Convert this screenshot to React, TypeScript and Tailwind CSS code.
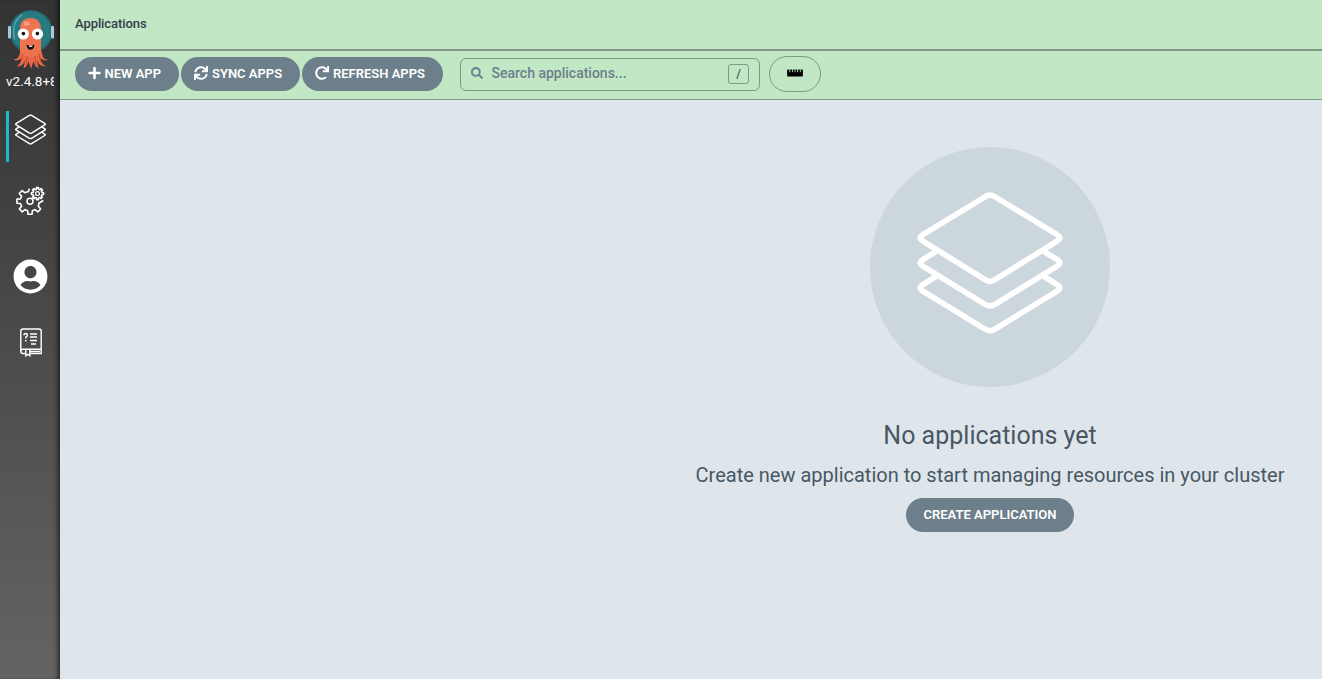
import React from 'react';
import { FaPlus, FaSync, FaRedo, FaSearch, FaRulerHorizontal, FaUserCircle } from 'react-icons/fa';

function Layers({ className, stroke }: { className: string; stroke: number }) {
  return (
    <svg viewBox="46 43 148 146" className={className} fill="none" stroke="white" strokeWidth={stroke} strokeLinejoin="round">
      <path d="M115 49.8Q120 46.4 125 49.8L186.7 87.3C191 90 191 91.6 186.7 94.3L125 132.7Q120 135.9 115 132.7L53.3 94.3C49 91.6 49 90 53.3 87.3Z" />
      <path d="M66 104.5L53.3 112.3C49 115 49 116.6 53.3 119.3L115 157.3Q120 160.5 125 157.3L186.7 119.3C191 116.6 191 115 186.7 112.3L174 104.5" />
      <path d="M66 129.5L53.3 137.3C49 140 49 141.6 53.3 144.3L115 182.2Q120 185.4 125 182.2L186.7 144.3C191 141.6 191 140 186.7 137.3L174 129.5" />
    </svg>
  );
}

function gear(cx: number, cy: number, inner: number, outer: number, first: number, count: number, closed: boolean) {
  const pts: string[] = [];
  const add = (r: number, deg: number) => {
    const a = (deg * Math.PI) / 180;
    pts.push(`${(cx + r * Math.cos(a)).toFixed(2)} ${(cy + r * Math.sin(a)).toFixed(2)}`);
  };
  for (let i = 0; i < count; i++) {
    const a = first + i * 45;
    add(inner, a - 14);
    add(outer, a - 9);
    add(outer, a + 9);
    add(inner, a + 14);
  }
  return `M${pts.join('L')}${closed ? 'Z' : ''}`;
}

function Gears() {
  return (
    <svg viewBox="0 0 30 30" className="h-[30px] w-[30px]" fill="none" stroke="white" strokeWidth="1.6" strokeLinejoin="round" strokeLinecap="round">
      <path d={`M27.8 14.8L23.8 17.2${gear(15, 15.2, 9.8, 13.2, 45, 5, false).replace('M', 'L')}L13.3 5.6L14.2 3.2`} />
      <circle cx="15" cy="15.2" r="3" strokeWidth="1.6" />
      <path d={gear(22.5, 7.6, 4.5, 6.1, 0, 8, true)} strokeWidth="1.6" />
      <circle cx="22.5" cy="7.6" r="1.9" strokeWidth="1.2" />
    </svg>
  );
}

function Manual() {
  return (
    <svg viewBox="0 0 22 29" className="h-[29px] w-[22px]" fill="none" stroke="white" strokeWidth="1.4">
      <path d="M5.5 25.5H3Q.8 25.5.8 23.3V3.2Q.8 1 3 1H19Q21.2 1 21.2 3.2V25.5H10" />
      <path d="M.8 23.3Q.8 21.3 3 21.3H21.2M10 23.5H20" />
      <path d="M5.8 22V27.8L7.8 26.3L9.8 27.8V22" fill="#4a4a4a" />
      <path d="M4 7.2Q4 5.4 5.7 5.4T7.4 7.2Q7.4 8.3 5.8 9.2V10.6M5.8 12V13.6" strokeWidth="1.5" />
      <path d="M10 6H17M10 9H17M10 12.5H17M11 16H16" strokeWidth="1.5" />
    </svg>
  );
}

function Mascot() {
  return (
    <svg viewBox="0 0 48 62" className="h-[62px] w-[48px]">
      <circle cx="24" cy="23.5" r="21.5" fill="#246b72" />
      <circle cx="24" cy="23" r="19.5" fill="#277b80" />
      <path d="M7.5 31Q4 14 15 7" fill="none" stroke="#65a4a7" strokeWidth="1.4" strokeLinecap="round" />
      <rect x="1" y="18" width="3" height="12.5" rx="1" fill="#a9c9e2" />
      <rect x="44" y="18" width="3" height="12.5" rx="1" fill="#a9c9e2" />
      <path d="M14 42L34 42L36 49Q37 51.5 41 51.5Q37 54 33.5 50Q34 56 39 58.5Q32 59 30 52L31.5 60.5Q27 58 26.5 53L24 61L21.5 53Q21 58 16.5 60.5L18 52Q16 59 9.5 58.5Q14 56 14.5 50Q11 54 6.5 51.5Q11 51 12 48Z" fill="#e96845" />
      <path d="M13 44V22Q13 10 23.5 10T34 22V44Q33 49 23.5 49T13 44Z" fill="#ee7350" />
      <path d="M16 46L14 54M20 48L19 57M28 48L29 57M32 46L34 54" stroke="#c94f32" strokeWidth="1" />
      <ellipse cx="19.5" cy="15.5" rx="3" ry="2.2" fill="#f6a17f" />
      <circle cx="16.3" cy="26" r="5.6" fill="white" />
      <circle cx="30.5" cy="26" r="5.6" fill="white" />
      <circle cx="16.4" cy="25.6" r="1.8" fill="#111" />
      <circle cx="30.4" cy="25.6" r="1.8" fill="#111" />
      <path d="M19.5 36.5Q23.5 39 27.5 36.5Q27 41.8 23.5 41.8T19.5 36.5Z" fill="#111" />
      <path d="M22 37.7H25.3V38.8H22Z" fill="white" />
    </svg>
  );
}

const pill = 'flex h-[34px] items-center rounded-full bg-[#6d7f8b] text-[13px] font-semibold text-white whitespace-nowrap';

export default function App() {
  return (
    <div className="flex h-[679px] w-full overflow-hidden bg-[#dee6ec] font-[Roboto,sans-serif]">
      <aside className="flex w-[60px] shrink-0 flex-col bg-linear-to-b from-[#333333] to-[#646464] px-[6px] shadow-[inset_-5px_0_5px_-3px_rgba(0,0,0,0.65)]">
        <div className="ml-px mt-[8px] h-[62px] w-[48px]">
          <Mascot />
        </div>
        <div className="mt-px h-[20px] w-[48px] overflow-hidden whitespace-nowrap text-[13.5px] leading-[20px] text-white">v2.4.8+8</div>
        <nav className="mt-[20px] flex flex-col">
          <div className="flex h-[51px] justify-center border-l-3 border-[#18becd] pr-[3px] pt-[3px]">
            <Layers className="h-[31px] w-[33px]" stroke={6.8} />
          </div>
          <div className="mt-[24px] flex h-[30px] justify-center"><Gears /></div>
          <div className="mt-[43px] flex h-[35px] justify-center"><FaUserCircle className="h-[35px] w-[35px] text-white" /></div>
          <div className="mt-[34px] flex justify-center pl-px"><Manual /></div>
        </nav>
      </aside>

      <main className="min-w-0 flex-1 overflow-hidden">
        <header className="flex h-[51px] items-center border-b-2 border-[#809786] bg-[#c1e7c5] px-[15px] pb-[2px] text-[13px] font-medium tracking-[-0.08px] text-[#363c4a]">Applications</header>
        <div className="flex h-[49px] items-center border-b border-[#809786] bg-[#c1e7c5] pb-[2px] pl-[15px]">
          <button className={`${pill} w-[104px] pl-[12.5px]`}><FaPlus className="mb-[2px] mr-[4px] h-[14px] w-[13px]" />NEW APP</button>
          <button className={`${pill} ml-[2px] w-[119px] pl-[13px]`}><FaSync className="mb-[2px] mr-[4px] h-[14px] w-[14px]" />SYNC APPS</button>
          <button className={`${pill} ml-[2px] w-[141px] pl-[13px]`}><FaRedo className="mb-[2px] mr-[4px] h-[14px] w-[14px]" />REFRESH APPS</button>
          <div className="ml-[17px] flex h-[33px] w-[300px] items-center rounded-[6px] border border-[#809786] pl-[9.5px] pr-[10px] text-[14px] font-medium text-[#6d7f8b]">
            <FaSearch className="mb-[2px] mr-[9px] h-[12px] w-[12px]" />
            <span className="flex-1 pb-[2px]">Search applications...</span>
            <span className="flex h-[20px] w-[21px] items-center justify-center rounded-[3px] border border-[#809786] text-[12px] leading-none text-[#495763]">/</span>
          </div>
          <button className="ml-[9px] flex h-[36px] w-[52px] items-center justify-center rounded-full border border-[#809786] text-black">
            <FaRulerHorizontal className="mb-[2px] h-[14px] w-[16px]" />
          </button>
        </div>

        <section className="flex w-[1860px] flex-col items-center pt-[47px] text-[#495763]">
          <div className="flex h-[240px] w-[240px] items-center justify-center rounded-full bg-[#ccd6dd] pb-[8px]">
            <Layers className="h-[146px] w-[148px]" stroke={5.6} />
          </div>
          <h4 className="mt-[31px] whitespace-nowrap text-[25px] leading-[36px]">No applications yet</h4>
          <h5 className="mt-[6px] whitespace-nowrap text-[20px] leading-[30px]">Create new application to start managing resources in your cluster</h5>
          <button className={`${pill} mt-[8px] w-[168px] justify-center`}>CREATE APPLICATION</button>
        </section>
      </main>
    </div>
  );
}
